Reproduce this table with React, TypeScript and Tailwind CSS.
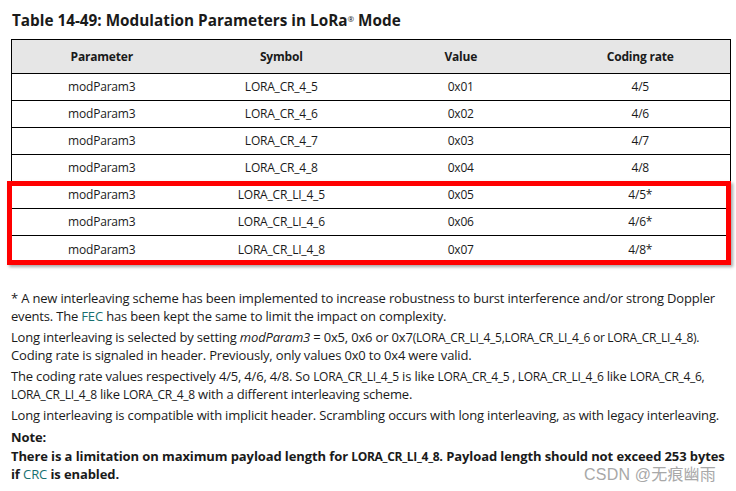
const rows = [
  { param: "modParam3", symbol: "LORA_CR_4_5", value: "0x01", rate: "4/5" },
  { param: "modParam3", symbol: "LORA_CR_4_6", value: "0x02", rate: "4/6" },
  { param: "modParam3", symbol: "LORA_CR_4_7", value: "0x03", rate: "4/7" },
  { param: "modParam3", symbol: "LORA_CR_4_8", value: "0x04", rate: "4/8" },
]

const liRows = [
  { param: "modParam3", symbol: "LORA_CR_LI_4_5", value: "0x05", rate: "4/5*" },
  { param: "modParam3", symbol: "LORA_CR_LI_4_6", value: "0x06", rate: "4/6*" },
  { param: "modParam3", symbol: "LORA_CR_LI_4_8", value: "0x07", rate: "4/8*" },
]

function Row({ r, last }: { r: typeof rows[number]; last?: boolean }) {
  return (
    <div className={`grid grid-cols-4 h-[27px] items-center text-center ${last ? "" : "border-b border-black"}`}>
      <span>{r.param}</span>
      <span>{r.symbol}</span>
      <span>{r.value}</span>
      <span>{r.rate}</span>
    </div>
  )
}

function Sym({ children }: { children: React.ReactNode }) {
  return <span className="text-[12px] tracking-[-0.3px]">{children}</span>
}

export default function App() {
  return (
    <div
      className="w-[736px] h-[491px] bg-white text-[#1a1a1a] relative overflow-hidden"
      style={{ fontFamily: '"Open Sans", "Noto Sans", sans-serif' }}
    >
      <h1 className="pl-[12px] pt-[10px] h-[39px] text-[15.3px] font-bold leading-[20px] tracking-[0px]">
        Table 14-49: Modulation Parameters in LoRa<sup className="text-[8px] font-normal">®</sup> Mode
      </h1>

      <div className="ml-[11px] w-[720px] border-l border-r border-t border-black text-[12px] tracking-[-0.2px]">
        <div className="grid grid-cols-4 h-[34px] items-center text-center bg-[#e6e6e6] border-b border-black font-bold">
          <span>Parameter</span>
          <span>Symbol</span>
          <span>Value</span>
          <span>Coding rate</span>
        </div>
        {rows.map((r) => (
          <Row key={r.symbol} r={r} />
        ))}
        <div className="relative">
          {liRows.map((r, i) => (
            <Row key={r.symbol} r={r} last={i === liRows.length - 1} />
          ))}
          <div className="absolute left-[-5px] top-[-1px] w-[724px] h-[84px] border-[5px] border-[#ff0000] shadow-[2px_2px_3px_rgba(0,0,0,0.35)]" />
        </div>
      </div>

      <div className="mt-[27px] ml-[11px] w-[725px] text-[13px] leading-[17.5px] tracking-[-0.18px] space-y-[4px] whitespace-nowrap">
        <p>
          * A new interleaving scheme has been implemented to increase robustness to burst interference and/or strong Doppler
          <br />
          events. The <span className="text-[#177070]">FEC</span> has been kept the same to limit the impact on complexity.
        </p>
        <p>
          Long interleaving is selected by setting <i>modParam3</i> = 0x5, 0x6 or 0x7
          <Sym>(LORA_CR_LI_4_5,LORA_CR_LI_4_6 or LORA_CR_LI_4_8).</Sym>
          <br />
          Coding rate is signaled in header. Previously, only values 0x0 to 0x4 were valid.
        </p>
        <p>
          The coding rate values respectively 4/5, 4/6, 4/8. So <Sym>LORA_CR_LI_4_5</Sym> is like{" "}
          <Sym>LORA_CR_4_5 , LORA_CR_LI_4_6</Sym> like <Sym>LORA_CR_4_6,</Sym>
          <br />
          <Sym>LORA_CR_LI_4_8</Sym> like <Sym>LORA_CR_4_8</Sym> with a different interleaving scheme.
        </p>
        <p>Long interleaving is compatible with implicit header. Scrambling occurs with long interleaving, as with legacy interleaving.</p>
        <div className="font-bold tracking-[-0.1px]">
          <p>Note:</p>
          <p className="mt-[2px]">
            There is a limitation on maximum payload length for <Sym>LORA_CR_LI_4_8</Sym>. Payload length should not exceed 253 bytes
            <br />
            if <span className="text-[#177070] font-normal">CRC</span> is enabled.
          </p>
        </div>
      </div>

      <div
        className="absolute left-[584px] top-[467px] text-[16px] leading-[15px] text-[#a8a8a8] tracking-[0.2px]"
        style={{ fontFamily: '"Liberation Sans", "Noto Sans CJK SC", sans-serif' }}
      >
        CSDN @无痕幽雨
      </div>
    </div>
  )
}
